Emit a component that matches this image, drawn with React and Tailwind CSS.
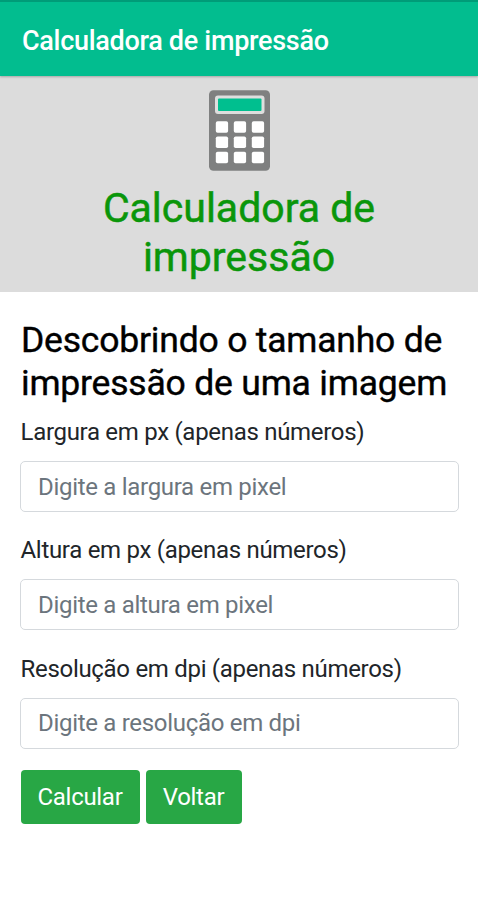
import React, { useState } from "react";

const campos = [
  { id: "largura", label: "Largura em px (apenas números)", placeholder: "Digite a largura em pixel" },
  { id: "altura", label: "Altura em px (apenas números)", placeholder: "Digite a altura em pixel" },
  { id: "resolucao", label: "Resolução em dpi (apenas números)", placeholder: "Digite a resolução em dpi" },
];

const Calculadora = () => (
  <svg width="62" height="81" viewBox="0 0 62 81" fill="none">
    <rect x="1" y="0.3" width="61" height="80.5" rx="4.5" fill="#7f8080" />
    <rect x="7" y="5.5" width="49.5" height="18.5" rx="3" fill="#dedede" />
    <rect x="10" y="8.5" width="43.5" height="12.5" rx="1" fill="#00bf8f" />
    {[31.2, 46.5, 61.7].map((y) =>
      [7.8, 25.8, 43.8].map((x) => (
        <rect key={`${x}-${y}`} x={x} y={y} width="12.3" height="11.5" rx="1.8" fill="#fff" />
      ))
    )}
  </svg>
);

const App = () => {
  const [valores, setValores] = useState({ largura: "", altura: "", resolucao: "" });

  return (
    <div className="min-h-screen bg-white font-[Roboto,sans-serif] text-black">
      <header className="relative h-[76px] border-t-2 border-[#009c78] bg-[#02bd8f] flex items-center px-[22px] shadow-[0_1px_2px_rgba(0,0,0,0.25)]">
        <span className="text-[27px] tracking-[-0.3px] font-medium text-white pt-[5px]">Calculadora de impressão</span>
      </header>

      <div className="h-[216px] bg-[#dcdcdc] flex flex-col items-center pt-[14px]">
        <Calculadora />
        <h1 className="mt-[13px] text-center text-[41px] leading-[49px] font-normal [-webkit-text-stroke:0.5px_#0a960a] text-[#0a960a]">
          Calculadora de<br />impressão
        </h1>
      </div>

      <main className="pl-[20px] pr-[19px] pt-[27px]">
        <h2 className="pl-px text-[35.5px] tracking-[-0.2px] leading-[43px] font-normal [-webkit-text-stroke:0.4px_#000]">
          Descobrindo o tamanho de<br />impressão de uma imagem
        </h2>
        <form className="mt-[10px]" onSubmit={(e) => e.preventDefault()}>
          {campos.map((c) => (
            <div key={c.id} className="mb-[21.3px]">
              <label htmlFor={c.id} className="block h-[36px] mb-[10px] pl-[0.5px] text-[24px] leading-[35px] tracking-[-0.3px] text-[#212529]">{c.label}</label>
              <input
                id={c.id}
                placeholder={c.placeholder}
                value={valores[c.id]}
                onChange={(e) => setValores({ ...valores, [c.id]: e.target.value })}
                className="block w-full h-[51px] px-[17px] text-[24px] tracking-[-0.3px] border border-[#d5d9dd] rounded-[5px] placeholder:text-[#6c757d] focus:outline-none"
              />
            </div>
          ))}
          <div className="flex gap-[6px] pl-[0.5px]">
            <button type="submit" className="w-[119px] h-[54px] text-[24px] tracking-[-0.3px] text-white bg-[#28a745] rounded-[4px]">Calcular</button>
            <button type="button" className="w-[96px] h-[54px] text-[24px] tracking-[-0.3px] text-white bg-[#28a745] rounded-[4px]">Voltar</button>
          </div>
        </form>
      </main>
    </div>
  );
};

export default App;
